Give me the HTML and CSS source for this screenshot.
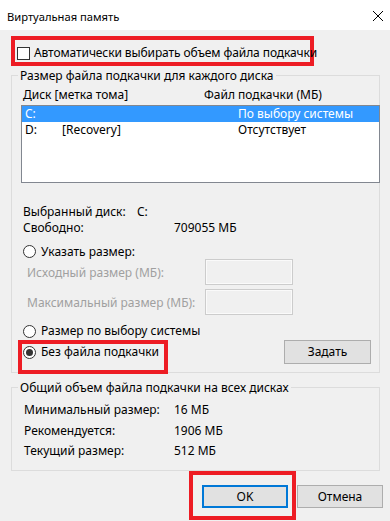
FILE: index.html
```html
<!DOCTYPE html>
<html lang="ru">

<head>
    <meta charset="UTF-8">
    <meta name="viewport" content="width=device-width, initial-scale=1.0">
    <title>Виртуальная память</title>
    <link rel="stylesheet" href="styles.css">
</head>

<body>

    <div class="titlebar">
        <span class="title">Виртуальная память</span>
        <svg class="close" width="10" height="10" viewBox="0 0 10 10">
            <path d="M0 0L10 10M10 0L0 10" stroke="#000" stroke-width="1" fill="none"/>
        </svg>
    </div>

    <!-- red marks are annotations from the screenshot -->
    <div class="mark auto-mark">
        <label class="check"><span class="box"></span>Автоматически выбирать объем файла подкачки</label>
    </div>

    <div class="group per-disk">
        <div class="legend">Размер файла подкачки для каждого диска</div>
        <div class="list-head">
            <span class="head-disk">Диск [метка тома]</span>
            <span>Файл подкачки (МБ)</span>
        </div>
        <div class="list">
            <div class="list-row selected">
                <span class="col-letter">C:</span>
                <span class="col-label"></span>
                <span>По выбору системы</span>
            </div>
            <div class="list-row">
                <span class="col-letter">D:</span>
                <span class="col-label">[Recovery]</span>
                <span>Отсутствует</span>
            </div>
        </div>

        <div class="info first-info"><span class="info-label">Выбранный диск:</span><span>C:</span></div>
        <div class="info"><span class="info-label wide">Свободно:</span><span>709055 МБ</span></div>

        <div class="radio-row custom"><span class="radio"></span>Указать размер:</div>
        <div class="size-row">
            <span class="size-label">Исходный размер (МБ):</span>
            <span class="size-input"></span>
        </div>
        <div class="size-row second">
            <span class="size-label">Максимальный размер (МБ):</span>
            <span class="size-input"></span>
        </div>

        <div class="radio-row system"><span class="radio"></span>Размер по выбору системы</div>
        <div class="last-row">
            <div class="radio-row none">
                <span class="radio checked"></span>Без файла подкачки
                <span class="mark overlay-mark"></span>
            </div>
            <button class="btn set">Задать</button>
        </div>
    </div>

    <div class="group totals">
        <div class="legend">Общий объем файла подкачки на всех дисках</div>
        <div class="total-rows">
            <div class="total"><span class="total-label">Минимальный размер:</span><span>16 МБ</span></div>
            <div class="total"><span class="total-label">Рекомендуется:</span><span>1906 МБ</span></div>
            <div class="total"><span class="total-label">Текущий размер:</span><span>512 МБ</span></div>
        </div>
    </div>

    <div class="buttons">
        <div class="mark ok-mark">
            <button class="btn ok">OK</button>
        </div>
        <button class="btn cancel">Отмена</button>
    </div>

</body>

</html>
```

FILE: styles.css
```css
body {
    margin: 0;
    width: 390px;
    height: 521px;
    overflow: hidden;
    background-color: #f0f0f0;
    font-family: "Noto Sans", "Open Sans", sans-serif;
    font-size: 12px;
    color: #000;
    white-space: nowrap;
}

.titlebar {
    height: 30px;
    background-color: #fff;
    display: flex;
    align-items: center;
    justify-content: space-between;
    padding: 2px 7px 0 7px;
    box-sizing: border-box;
}

.title {
    font-size: 11.2px;
}

.mark {
    border: 4px solid #ed1c24;
    box-sizing: border-box;
}

.auto-mark {
    margin: 6px 0 0 11px;
    width: 303px;
    height: 30px;
    padding: 5px 0 0 2px;
}

.check {
    display: flex;
    align-items: center;
    height: 16px;
    line-height: 16px;
    letter-spacing: -0.1px;
}

.box {
    width: 13px;
    height: 13px;
    flex-shrink: 0;
    box-sizing: border-box;
    border: 1px solid #333;
    background-color: #fff;
    margin-right: 4px;
}

.group {
    border: 1px solid #dcdcdc;
    margin: 9px 10px 0 11px;
}

.legend {
    display: table;
    margin: -8px 0 0 6px;
    padding: 0 2px;
    line-height: 15px;
    background-color: #f0f0f0;
}

.list-head {
    display: flex;
    margin-top: 4px;
    padding-left: 11px;
    line-height: 16px;
}

.head-disk {
    width: 181px;
}

.list {
    margin: 2px -1px 0 9px;
    height: 78px;
    box-sizing: border-box;
    border: 1px solid #828790;
    background-color: #fff;
}

.list-row {
    display: flex;
    height: 16px;
    line-height: 16px;
    padding-left: 3px;
}

.list-row.selected {
    background-color: #3399ff;
    color: #fff;
}

.col-letter {
    width: 37px;
}

.col-label {
    width: 176px;
}

.info {
    display: flex;
    line-height: 16px;
    padding-left: 11px;
}

.first-info {
    margin-top: 21px;
}

.info-label {
    width: 114px;
}

.info-label.wide {
    width: 151px;
}

.radio-row {
    display: flex;
    align-items: center;
    line-height: 16px;
    padding-left: 11px;
}

.radio {
    width: 13px;
    height: 13px;
    flex-shrink: 0;
    box-sizing: border-box;
    border: 1px solid #333;
    border-radius: 50%;
    background-color: #fff;
    margin-right: 5px;
    display: flex;
    align-items: center;
    justify-content: center;
}

.radio.checked::after {
    content: "";
    width: 7px;
    height: 7px;
    border-radius: 50%;
    background-color: #333;
}

.radio-row.custom {
    margin-top: 8px;
    height: 15px;
}

.size-row {
    display: flex;
    align-items: center;
    height: 26px;
    padding-left: 15px;
    color: #a0a0a0;
}

.size-row.second {
    margin-top: 4px;
}

.size-label {
    width: 178px;
}

.size-input {
    width: 88px;
    height: 26px;
    box-sizing: border-box;
    border: 1px solid #cccccc;
    box-shadow: inset 0 0 0 1px #fafafa;
}

.radio-row.system {
    margin-top: 8px;
    height: 16px;
}

.last-row {
    display: flex;
    align-items: center;
    justify-content: space-between;
    height: 24px;
    margin-top: 1px;
    padding-right: 8px;
    margin-bottom: 8px;
}

.radio-row.none {
    position: relative;
}

.overlay-mark {
    position: absolute;
    left: 6px;
    top: -4px;
    width: 150px;
    height: 34px;
}

.btn {
    font: inherit;
    color: #000;
    background-color: #e1e1e1;
    border: 1px solid #adadad;
    padding: 0;
    margin: 0;
    box-sizing: border-box;
    line-height: 16px;
}

.btn.set {
    width: 87px;
    height: 24px;
}

.totals {
    margin-top: 14px;
    padding-bottom: 8.5px;
}

.total-rows {
    margin-top: 5px;
}

.total {
    display: flex;
    line-height: 20.5px;
    padding-left: 12px;
}

.total-label {
    width: 150px;
}

.buttons {
    display: flex;
    justify-content: flex-end;
    align-items: flex-start;
    padding-right: 7px;
}

.ok-mark {
    width: 107px;
    height: 49px;
    padding: 10px 0 0 9px;
}

.btn.ok {
    width: 86px;
    height: 23px;
    border: 2px solid #0078d7;
}

.btn.cancel {
    width: 86px;
    height: 23px;
    margin: 14px 0 0 1px;
}
```
